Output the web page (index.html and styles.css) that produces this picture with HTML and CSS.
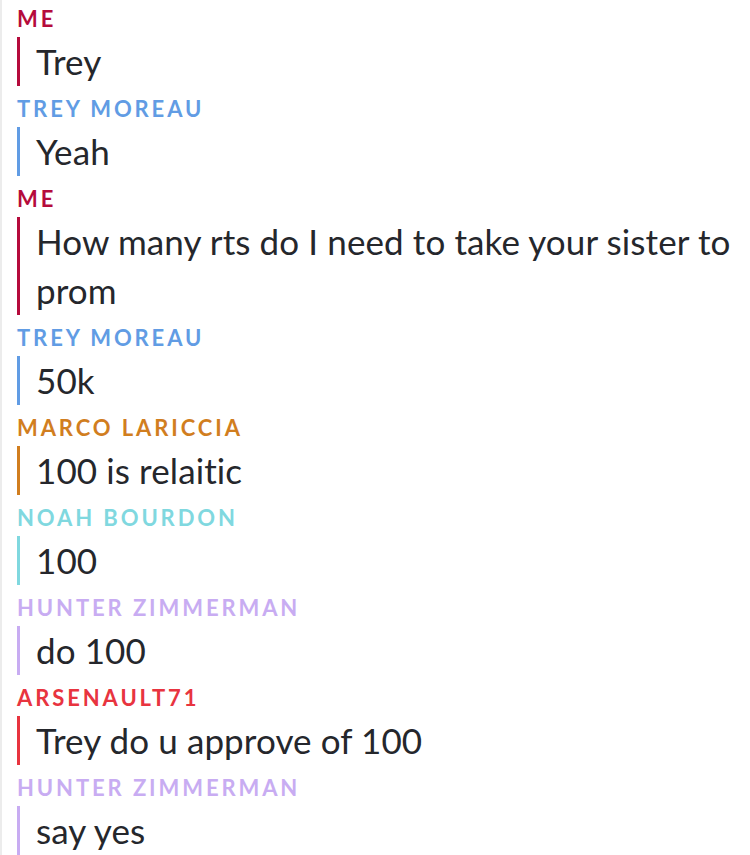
FILE: index.html
```html
<!DOCTYPE html>
<html lang="en">
<head>
    <meta charset="UTF-8">
    <meta name="viewport" content="width=device-width, initial-scale=1.0">
    <title>Chat</title>
    <link rel="stylesheet" href="styles.css">
</head>
<body>
    <div class="chat">
        <div class="entry me">
            <div class="name">Me</div>
            <div class="msg">Trey</div>
        </div>
        <div class="entry trey">
            <div class="name">Trey Moreau</div>
            <div class="msg">Yeah</div>
        </div>
        <div class="entry me">
            <div class="name">Me</div>
            <div class="msg">How many rts do I need to take your sister to prom</div>
        </div>
        <div class="entry trey">
            <div class="name">Trey Moreau</div>
            <div class="msg">50k</div>
        </div>
        <div class="entry marco">
            <div class="name">Marco Lariccia</div>
            <div class="msg">100 is relaitic</div>
        </div>
        <div class="entry noah">
            <div class="name">Noah Bourdon</div>
            <div class="msg">100</div>
        </div>
        <div class="entry hunter">
            <div class="name">Hunter Zimmerman</div>
            <div class="msg">do 100</div>
        </div>
        <div class="entry arsenault">
            <div class="name">Arsenault71</div>
            <div class="msg">Trey do u approve of 100</div>
        </div>
        <div class="entry hunter">
            <div class="name">Hunter Zimmerman</div>
            <div class="msg">say yes</div>
        </div>
    </div>
</body>
</html>
```

FILE: styles.css
```css
body {
    margin: 0;
    padding: 0;
    background: #ffffff;
    font-family: Lato, "Open Sans", sans-serif;
}
.chat {
    border-left: 2px solid #ececec;
    min-height: 855px;
    padding: 0 8px 0 15px;
    box-sizing: border-box;
}
.entry .name {
    padding-top: 11px;
    margin-bottom: 6px;
    font-size: 22px;
    line-height: 24px;
    font-weight: 700;
    letter-spacing: 2.9px;
    text-transform: uppercase;
}
.entry:first-child .name {
    padding-top: 7px;
}
.entry .msg {
    border-left: 3px solid;
    padding-left: 16px;
    font-size: 35px;
    line-height: 49px;
    letter-spacing: 0.1px;
    color: #25272c;
}
.me .name { color: #b50b3c; }
.me .msg { border-color: #b50b3c; }
.trey .name { color: #619ce4; }
.trey .msg { border-color: #619ce4; }
.marco .name { color: #d17e1f; }
.marco .msg { border-color: #d17e1f; }
.noah .name { color: #80d8df; }
.noah .msg { border-color: #80d8df; }
.hunter .name { color: #c8acf2; }
.hunter .msg { border-color: #c8acf2; }
.arsenault .name { color: #e8343f; }
.arsenault .msg { border-color: #e8343f; }
```
